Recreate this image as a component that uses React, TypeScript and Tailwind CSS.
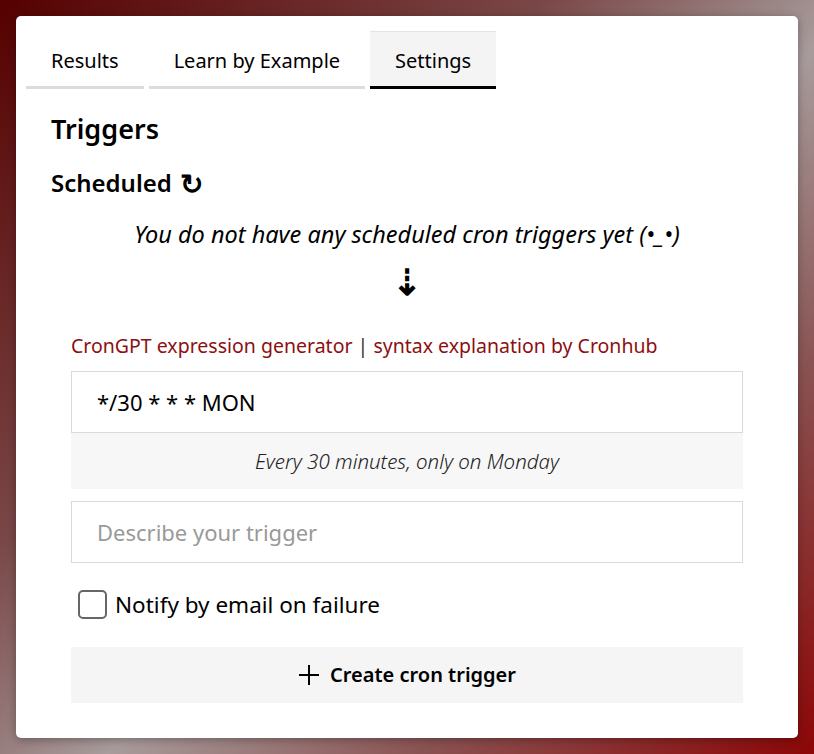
import { useState } from "react";

const tabs = ["Results", "Learn by Example", "Settings"];

export default function App() {
  const [active, setActive] = useState("Settings");
  const [cron, setCron] = useState("*/30 * * * MON");
  const [notify, setNotify] = useState(false);

  return (
    <div
      className="min-h-screen p-4 bg-[linear-gradient(135deg,#560000_0%,#7a4848_35%,#a89c9c_55%,#8a5252_75%,#8c0606_100%)]"
      style={{ fontFamily: '"Segoe UI", "Noto Sans", "Open Sans", sans-serif' }}
    >
      <div className="bg-white rounded-[5px] shadow-[0_2px_10px_rgba(0,0,0,0.3)] h-[722px] px-[10px] pt-[15px]">
        {/* tab bar */}
        <div className="flex gap-[5px]">
          {tabs.map((t) => (
            <button
              key={t}
              onClick={() => setActive(t)}
              className={`h-[58px] px-[25px] pt-[4px] text-[20px] text-black border-b-[3px] ${
                active === t
                  ? "bg-[#f4f4f4] border-black border-t border-t-[#e4e4e4]"
                  : "border-[#dcdcdc]"
              }`}
            >
              {t}
            </button>
          ))}
        </div>

        <div className="px-[25px]">
          <h2 className="text-[27px] font-semibold text-black mt-[24px] leading-[32px]">
            Triggers
          </h2>
          <h3 className="text-[24px] font-semibold text-black mt-[22px] leading-[32px] flex items-center gap-[8px]">
            Scheduled <span className="font-bold text-[28px] leading-[32px]">↻</span>
          </h3>

          <p className="text-center italic text-[23.5px] text-black mt-[20px] leading-[30px]">
            You do not have any scheduled cron triggers yet (•_•)
          </p>
          <div className="text-center text-[36px] leading-[40px] mt-[13px] font-bold">⇣</div>

          <div className="px-[20px] mt-[30px]">
            <p className="text-[19.5px] leading-[28px] text-[#333]">
              <a href="#" className="text-[#8b1010]">
                CronGPT expression generator
              </a>{" "}
              |{" "}
              <a href="#" className="text-[#8b1010]">
                syntax explanation by Cronhub
              </a>
            </p>

            <input
              value={cron}
              onChange={(e) => setCron(e.target.value)}
              className="mt-[11px] w-full h-[62px] border border-[#dadada] px-[25px] text-[22px] text-black outline-none"
            />
            <div className="h-[56px] bg-[#f7f7f7] flex items-center justify-center italic font-light text-[20.5px] text-[#222]">
              Every 30 minutes, only on Monday
            </div>

            <input
              placeholder="Describe your trigger"
              className="mt-[12px] w-full h-[62px] border border-[#dadada] px-[25px] text-[22px] text-black placeholder:text-[#999] outline-none"
            />

            <label className="flex items-center gap-[8px] mt-[25px] ml-[7px] cursor-pointer">
              <span
                onClick={() => setNotify(!notify)}
                className={`w-[29px] h-[29px] rounded-[5px] border-2 border-[#666] flex items-center justify-center ${
                  notify ? "bg-[#666]" : "bg-white"
                }`}
              >
                {notify && <span className="text-white text-[16px]">✓</span>}
              </span>
              <span className="text-[22.5px] text-black">Notify by email on failure</span>
            </label>

            <button className="mt-[25px] w-full h-[56px] bg-[#f5f5f5] flex items-center justify-center gap-[10px] text-[20px] font-semibold text-black">
              <svg width="22" height="22" viewBox="0 0 22 22" fill="none" stroke="black" strokeWidth="2">
                <path d="M11 1v20M1 11h20" />
              </svg>
              Create cron trigger
            </button>
          </div>
        </div>
      </div>
    </div>
  );
}
